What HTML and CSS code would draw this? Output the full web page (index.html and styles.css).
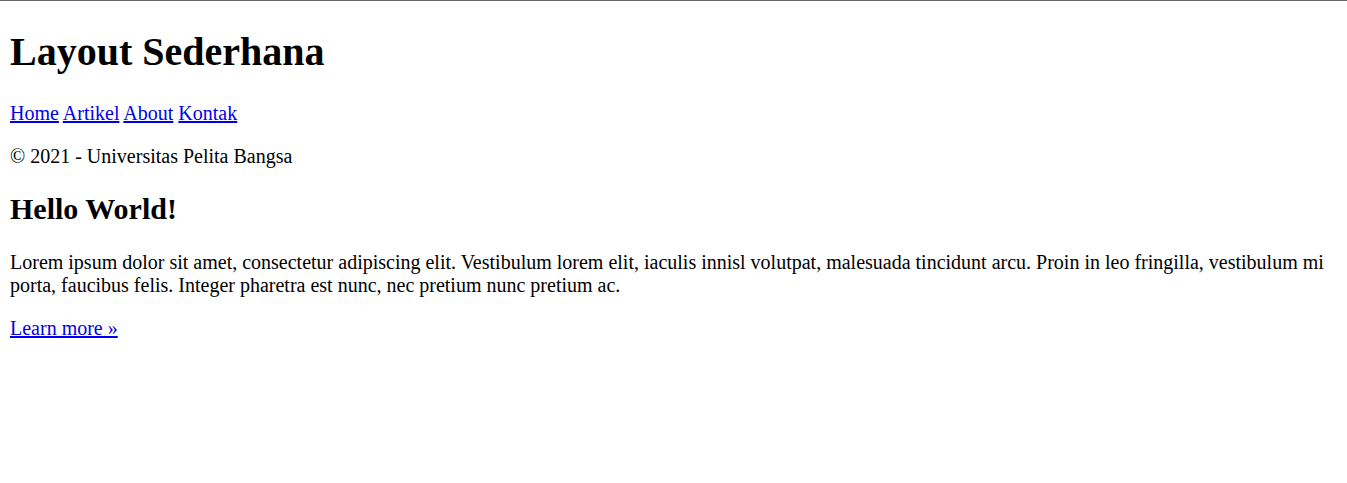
FILE: index.html
```html
<!DOCTYPE html>
<html>
<head>
<meta charset="utf-8">
<title>Layout Sederhana</title>
<link rel="stylesheet" href="styles.css">
</head>
<body class="page">
<div class="topline"></div>
<div class="container">
  <header class="header"><h1 class="title">Layout Sederhana</h1></header>
  <nav class="nav"><a href="#">Home</a> <a href="#">Artikel</a> <a href="#">About</a> <a href="#">Kontak</a></nav>
  <footer class="footer"><p class="footer-text">&copy; 2021 - Universitas Pelita Bangsa</p></footer>
  <section class="content">
    <h2 class="heading">Hello World!</h2>
    <p class="text">Lorem ipsum dolor sit amet, consectetur adipiscing elit. Vestibulum lorem elit, iaculis innisl volutpat, malesuada tincidunt arcu. Proin in leo fringilla, vestibulum mi porta, faucibus felis. Integer pharetra est nunc, nec pretium nunc pretium ac.</p>
    <p class="text"><a href="#">Learn more &raquo;</a></p>
  </section>
</div>
</body>
</html>
```
FILE: styles.css
```css
.page {
  margin: 0;
  font-family: "Liberation Serif", "Times New Roman", serif;
  font-size: 20px;
  color: #000;
  background: #fff;
}
.topline {
  height: 1px;
  background: #666;
}
.container {
  padding: 0 10px;
}
.title {
  font-size: 40px;
  margin: 26.8px 0;
}
.nav a, .text a {
  color: #0000ee;
}
.footer-text {
  margin: 20px 0;
}
.heading {
  font-size: 30px;
  margin: 24.9px 0;
}
.text {
  margin: 20px 0;
}
```
